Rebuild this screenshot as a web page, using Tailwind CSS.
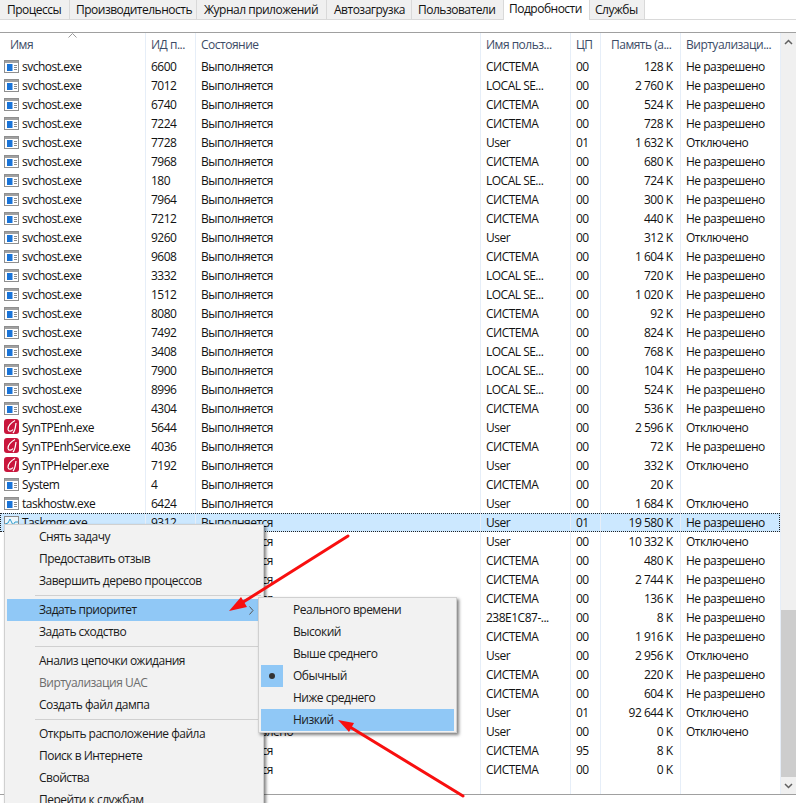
<!DOCTYPE html>
<html lang="ru">
<head>
<meta charset="utf-8">
<script src="https://cdn.jsdelivr.net/npm/@tailwindcss/browser@4"></script>
<title>Подробности</title>
</head>
<body class="bg-white">
<div class="relative w-[796px] h-[803px] overflow-hidden bg-white text-[12px] leading-[19px] text-[#111] font-['Open_Sans','Noto_Sans',sans-serif] tracking-[-0.5px]">
<svg class="hidden">
  <symbol id="win" viewBox="0 0 15 13">
    <rect x="0.5" y="0.5" width="14" height="12" fill="#fff" stroke="#8f8f8f"/>
    <rect x="1" y="1" width="13" height="2" fill="#a0a0a0"/>
    <rect x="3" y="4" width="5.500" height="7" fill="#1a74d8"/>
    <path d="M10 5.500h3M10 7.500h3M10 9.500h3" stroke="#8a8a8a" stroke-width="1"/>
  </symbol>
  <symbol id="syn" viewBox="0 0 15 15">
    <rect width="15" height="15" rx="3" fill="#c9163c"/>
    <path d="M11 1.500C7 3.500 3.500 7.500 4 10.500c.5 2.500 3.500 2 5 0M12 4c-.5 3-.5 7-3 10" fill="none" stroke="#fff" stroke-width="1.200"/>
  </symbol>
  <symbol id="tm" viewBox="0 0 15 13">
    <rect x="0.5" y="0.5" width="14" height="12" fill="#eef6fb" stroke="#8a8a8a"/>
    <path d="M1 8l3-1 2-4 3 6 2-3h3" fill="none" stroke="#2f9fd0" stroke-width="1"/>
  </symbol>
</svg>

<!-- tabs -->
<div class="flex h-[20px] bg-[#f0f0f0] border-b border-[#d9d9d9] leading-[20px]">
  <div class="w-[70px] pl-[7px] border-r border-[#d9d9d9]">Процессы</div>
  <div class="w-[127px] pl-[6px] border-r border-[#d9d9d9]">Производительность</div>
  <div class="w-[130px] pl-[7px] border-r border-[#d9d9d9]">Журнал приложений</div>
  <div class="w-[85px] pl-[7px] border-r border-[#d9d9d9]">Автозагрузка</div>
  <div class="w-[91px] pl-[6px]">Пользователи</div>
  <div class="w-[87px] h-[20px] pl-[5px] bg-white border-x border-[#d9d9d9] leading-[17px]">Подробности</div>
  <div class="w-[55px] pl-[5px] border-r border-[#d9d9d9]">Службы</div>
  <div class="flex-1 bg-white"></div>
</div>
<div class="h-[12px]"></div>

<!-- list -->
<div class="flex h-[763px] border-y border-[#a0a0a0]">
  <table class="w-[780px] table-fixed border-collapse shrink-0 [&_td]:h-[19px] [&_td]:p-0 [&_td]:pl-[5.5px] [&_td]:whitespace-nowrap [&_td]:overflow-hidden [&_td]:border-r [&_td]:border-[#e6eef8] [&_th]:h-[24px] [&_th]:p-0 [&_th]:pl-[5.5px] [&_th]:pb-[2px] [&_th]:font-normal [&_th]:text-left [&_th]:text-[#3c4b66] [&_th]:border-r [&_th]:border-[#e6eef8] [&_td:nth-child(6)]:text-right [&_td:nth-child(6)]:pr-[7px] [&_th:nth-child(6)]:pl-[10.5px] [&_svg]:inline-block [&_svg]:mr-[3px] [&_svg]:align-[-2px] [&_td:first-child]:pl-[4px]">
    <colgroup>
      <col class="w-[145px]"><col class="w-[50px]"><col class="w-[285px]"><col class="w-[90px]"><col class="w-[30px]"><col class="w-[80px]"><col class="w-[100px]">
    </colgroup>
    <thead>
      <tr>
        <th class="relative !pl-[10px]">Имя<svg class="!absolute left-[68px] top-0" width="9" height="5" viewBox="0 0 9 5"><path d="M0.500 4.500L4.500 0.500l4 4" fill="none" stroke="#9a9a9a"/></svg></th>
        <th>ИД п...</th><th>Состояние</th><th>Имя польз...</th><th>ЦП</th><th>Память (а...</th><th>Виртуализаци...</th>
      </tr>
    </thead>
    <tbody>
      <tr><td><svg width="15" height="13"><use href="#win"/></svg>svchost.exe</td><td>6600</td><td>Выполняется</td><td>СИСТЕМА</td><td>00</td><td>128 K</td><td>Не разрешено</td></tr>
      <tr><td><svg width="15" height="13"><use href="#win"/></svg>svchost.exe</td><td>7012</td><td>Выполняется</td><td>LOCAL SE...</td><td>00</td><td>2 760 K</td><td>Не разрешено</td></tr>
      <tr><td><svg width="15" height="13"><use href="#win"/></svg>svchost.exe</td><td>6740</td><td>Выполняется</td><td>СИСТЕМА</td><td>00</td><td>524 K</td><td>Не разрешено</td></tr>
      <tr><td><svg width="15" height="13"><use href="#win"/></svg>svchost.exe</td><td>7224</td><td>Выполняется</td><td>СИСТЕМА</td><td>00</td><td>728 K</td><td>Не разрешено</td></tr>
      <tr><td><svg width="15" height="13"><use href="#win"/></svg>svchost.exe</td><td>7728</td><td>Выполняется</td><td>User</td><td>01</td><td>1 632 K</td><td>Отключено</td></tr>
      <tr><td><svg width="15" height="13"><use href="#win"/></svg>svchost.exe</td><td>7968</td><td>Выполняется</td><td>СИСТЕМА</td><td>00</td><td>680 K</td><td>Не разрешено</td></tr>
      <tr><td><svg width="15" height="13"><use href="#win"/></svg>svchost.exe</td><td>180</td><td>Выполняется</td><td>LOCAL SE...</td><td>00</td><td>724 K</td><td>Не разрешено</td></tr>
      <tr><td><svg width="15" height="13"><use href="#win"/></svg>svchost.exe</td><td>7964</td><td>Выполняется</td><td>СИСТЕМА</td><td>00</td><td>300 K</td><td>Не разрешено</td></tr>
      <tr><td><svg width="15" height="13"><use href="#win"/></svg>svchost.exe</td><td>7212</td><td>Выполняется</td><td>СИСТЕМА</td><td>00</td><td>440 K</td><td>Не разрешено</td></tr>
      <tr><td><svg width="15" height="13"><use href="#win"/></svg>svchost.exe</td><td>9260</td><td>Выполняется</td><td>User</td><td>00</td><td>312 K</td><td>Отключено</td></tr>
      <tr><td><svg width="15" height="13"><use href="#win"/></svg>svchost.exe</td><td>9608</td><td>Выполняется</td><td>СИСТЕМА</td><td>00</td><td>1 604 K</td><td>Не разрешено</td></tr>
      <tr><td><svg width="15" height="13"><use href="#win"/></svg>svchost.exe</td><td>3332</td><td>Выполняется</td><td>LOCAL SE...</td><td>00</td><td>720 K</td><td>Не разрешено</td></tr>
      <tr><td><svg width="15" height="13"><use href="#win"/></svg>svchost.exe</td><td>1512</td><td>Выполняется</td><td>LOCAL SE...</td><td>00</td><td>1 020 K</td><td>Не разрешено</td></tr>
      <tr><td><svg width="15" height="13"><use href="#win"/></svg>svchost.exe</td><td>8080</td><td>Выполняется</td><td>СИСТЕМА</td><td>00</td><td>92 K</td><td>Не разрешено</td></tr>
      <tr><td><svg width="15" height="13"><use href="#win"/></svg>svchost.exe</td><td>7492</td><td>Выполняется</td><td>СИСТЕМА</td><td>00</td><td>824 K</td><td>Не разрешено</td></tr>
      <tr><td><svg width="15" height="13"><use href="#win"/></svg>svchost.exe</td><td>3408</td><td>Выполняется</td><td>LOCAL SE...</td><td>00</td><td>768 K</td><td>Не разрешено</td></tr>
      <tr><td><svg width="15" height="13"><use href="#win"/></svg>svchost.exe</td><td>7900</td><td>Выполняется</td><td>LOCAL SE...</td><td>00</td><td>104 K</td><td>Не разрешено</td></tr>
      <tr><td><svg width="15" height="13"><use href="#win"/></svg>svchost.exe</td><td>8996</td><td>Выполняется</td><td>LOCAL SE...</td><td>00</td><td>524 K</td><td>Не разрешено</td></tr>
      <tr><td><svg width="15" height="13"><use href="#win"/></svg>svchost.exe</td><td>4304</td><td>Выполняется</td><td>СИСТЕМА</td><td>00</td><td>536 K</td><td>Не разрешено</td></tr>
      <tr><td><svg width="15" height="15"><use href="#syn"/></svg>SynTPEnh.exe</td><td>5644</td><td>Выполняется</td><td>User</td><td>00</td><td>2 596 K</td><td>Отключено</td></tr>
      <tr><td><svg width="15" height="15"><use href="#syn"/></svg>SynTPEnhService.exe</td><td>4036</td><td>Выполняется</td><td>СИСТЕМА</td><td>00</td><td>72 K</td><td>Не разрешено</td></tr>
      <tr><td><svg width="15" height="15"><use href="#syn"/></svg>SynTPHelper.exe</td><td>7192</td><td>Выполняется</td><td>User</td><td>00</td><td>332 K</td><td>Отключено</td></tr>
      <tr><td><svg width="15" height="13"><use href="#win"/></svg>System</td><td>4</td><td>Выполняется</td><td>СИСТЕМА</td><td>00</td><td>20 K</td><td></td></tr>
      <tr><td><svg width="15" height="13"><use href="#win"/></svg>taskhostw.exe</td><td>6424</td><td>Выполняется</td><td>User</td><td>00</td><td>1 684 K</td><td>Отключено</td></tr>
      <tr class="bg-[#cce8ff] outline-1 outline-dotted outline-offset-[-1px] outline-[#222]"><td><svg width="15" height="13"><use href="#tm"/></svg>Taskmgr.exe</td><td>9312</td><td>Выполняется</td><td>User</td><td>01</td><td>19 580 K</td><td>Не разрешено</td></tr>
      <tr><td></td><td></td><td>Выполняется</td><td>User</td><td>00</td><td>10 332 K</td><td>Отключено</td></tr>
      <tr><td></td><td></td><td>Выполняется</td><td>СИСТЕМА</td><td>00</td><td>480 K</td><td>Не разрешено</td></tr>
      <tr><td></td><td></td><td>Выполняется</td><td>СИСТЕМА</td><td>00</td><td>2 744 K</td><td>Не разрешено</td></tr>
      <tr><td></td><td></td><td>Выполняется</td><td>СИСТЕМА</td><td>00</td><td>136 K</td><td>Не разрешено</td></tr>
      <tr><td></td><td></td><td>Выполняется</td><td>238E1C87-...</td><td>00</td><td>8 K</td><td>Не разрешено</td></tr>
      <tr><td></td><td></td><td>Выполняется</td><td>СИСТЕМА</td><td>00</td><td>1 916 K</td><td>Не разрешено</td></tr>
      <tr><td></td><td></td><td>Выполняется</td><td>User</td><td>00</td><td>2 956 K</td><td>Отключено</td></tr>
      <tr><td></td><td></td><td>Выполняется</td><td>СИСТЕМА</td><td>00</td><td>220 K</td><td>Не разрешено</td></tr>
      <tr><td></td><td></td><td>Выполняется</td><td>СИСТЕМА</td><td>00</td><td>604 K</td><td>Не разрешено</td></tr>
      <tr><td></td><td></td><td>Выполняется</td><td>User</td><td>01</td><td>92 644 K</td><td>Отключено</td></tr>
      <tr><td></td><td></td><td>Приостановлено</td><td>User</td><td>00</td><td>0 K</td><td>Отключено</td></tr>
      <tr><td></td><td></td><td>Выполняется</td><td>СИСТЕМА</td><td>95</td><td>8 K</td><td></td></tr>
      <tr><td></td><td></td><td>Выполняется</td><td>СИСТЕМА</td><td>00</td><td>0 K</td><td></td></tr>
      <tr class="[&_td]:!h-[15px]"><td></td><td></td><td></td><td></td><td></td><td></td><td></td></tr>
    </tbody>
  </table>
  <!-- scrollbar -->
  <div class="flex-1 flex flex-col bg-[#f0f0f0]">
    <div class="h-[17px] flex items-center justify-center"><svg width="9" height="6" viewBox="0 0 9 6"><path d="M1 5l3.500-3.500L8 5" fill="none" stroke="#606060" stroke-width="1.500"/></svg></div>
    <div class="h-[560px]"></div>
    <div class="flex-1 bg-[#cdcdcd]"></div>
    <div class="h-[17px] flex items-center justify-center"><svg width="9" height="6" viewBox="0 0 9 6"><path d="M1 1l3.500 3.500L8 1" fill="none" stroke="#606060" stroke-width="1.500"/></svg></div>
  </div>
</div>

<!-- context menu -->
<div class="absolute left-[4px] top-[524px] w-[260px] h-[290px] bg-[#f2f2f2] border border-[#d0d0d0] shadow-[2px_2px_3px_rgba(0,0,0,0.5)] pt-[1px] px-[2px] leading-[22px] [&>div]:h-[22px] [&>div]:pl-[32px] text-[#1a1a1a]">
  <div>Снять задачу</div>
  <div>Предоставить отзыв</div>
  <div>Завершить дерево процессов</div>
  <p class="h-px mt-[3px] mb-[3px] ml-[28px] bg-[#d0d0d0]"></p>
  <div class="relative bg-[#90c8f6]">Задать приоритет<svg class="absolute right-[7px] top-[7px]" width="5" height="9" viewBox="0 0 5 9"><path d="M0.500 0.500l3.500 4-3.500 4" fill="none" stroke="#555"/></svg></div>
  <div>Задать сходство</div>
  <p class="h-px mt-[3px] mb-[3px] ml-[28px] bg-[#d0d0d0]"></p>
  <div>Анализ цепочки ожидания</div>
  <div class="text-[#6d6d6d]">Виртуализация UAC</div>
  <div>Создать файл дампа</div>
  <p class="h-px mt-[3px] mb-[3px] ml-[28px] bg-[#d0d0d0]"></p>
  <div>Открыть расположение файла</div>
  <div>Поиск в Интернете</div>
  <div>Свойства</div>
  <div>Перейти к службам</div>
</div>

<!-- submenu -->
<div class="absolute left-[258px] top-[597px] w-[199px] h-[136px] bg-[#f2f2f2] border border-[#d0d0d0] shadow-[2px_2px_3px_rgba(0,0,0,0.5)] py-[1px] px-[2px] leading-[22px] [&>div]:h-[22px] [&>div]:pl-[32px] text-[#1a1a1a]">
  <div>Реального времени</div>
  <div>Высокий</div>
  <div>Выше среднего</div>
  <div class="relative">Обычный<span class="absolute left-0 top-0 w-[22px] h-[22px] bg-[#90c8f6] flex items-center justify-center"><span class="w-[6px] h-[6px] rounded-full bg-[#333]"></span></span></div>
  <div>Ниже среднего</div>
  <div class="bg-[#90c8f6]">Низкий</div>
</div>

<!-- annotation arrows -->
<svg class="absolute left-0 top-0 pointer-events-none" width="796" height="803" viewBox="0 0 796 803">
  <path d="M348 536L240 604" stroke="#f80f0f" stroke-width="3" stroke-linecap="round"/>
  <path d="M229 611L241 597L247 607Z" fill="#f80f0f"/>
  <path d="M463 796L350 727" stroke="#f80f0f" stroke-width="3" stroke-linecap="round"/>
  <path d="M338 720L354 723L349 732Z" fill="#f80f0f"/>
</svg>
</div>
</body>
</html>
